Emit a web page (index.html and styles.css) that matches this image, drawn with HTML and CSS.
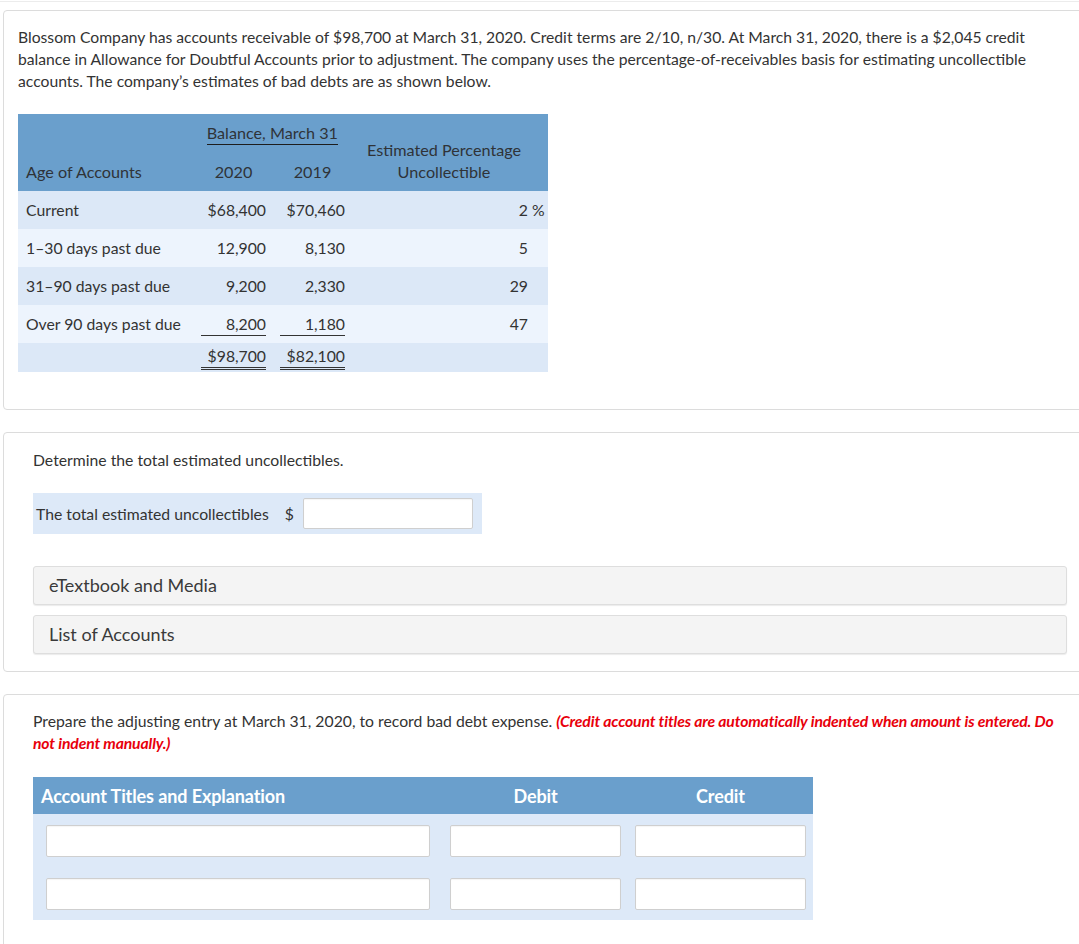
FILE: index.html
```html
<!DOCTYPE html>
<html>
<head>
<meta charset="utf-8">
<link rel="stylesheet" href="styles.css">
</head>
<body>
<div class="topline"></div>
<div class="page">
  <section class="card stem">
    <p class="intro">Blossom Company has accounts receivable of $98,700 at March 31, 2020. Credit terms are 2/10, n/30. At March 31, 2020, there is a $2,045 credit balance in Allowance for Doubtful Accounts prior to adjustment. The company uses the percentage-of-receivables basis for estimating uncollectible accounts. The company’s estimates of bad debts are as shown below.</p>
    <table class="aging">
      <colgroup>
        <col class="c1"><col class="c2"><col class="c3"><col class="c4"><col class="c5">
      </colgroup>
      <thead>
        <tr class="h1">
          <th class="age" rowspan="2">Age of Accounts</th>
          <th class="bal" colspan="2"><span class="bal-label">Balance, March 31</span></th>
          <th class="est" rowspan="2" colspan="2">Estimated Percentage<br>Uncollectible</th>
        </tr>
        <tr class="h2">
          <th class="yr"><span class="amt ctr">2020</span></th>
          <th class="yr"><span class="amt ctr">2019</span></th>
        </tr>
      </thead>
      <tbody>
        <tr class="odd">
          <td class="lbl">Current</td>
          <td class="num"><span class="amt">$68,400</span></td>
          <td class="num"><span class="amt">$70,460</span></td>
          <td class="pct">2</td>
          <td class="pctsign">&nbsp;%</td>
        </tr>
        <tr class="even">
          <td class="lbl">1–30 days past due</td>
          <td class="num"><span class="amt">12,900</span></td>
          <td class="num"><span class="amt">8,130</span></td>
          <td class="pct">5</td>
          <td class="pctsign"></td>
        </tr>
        <tr class="odd">
          <td class="lbl">31–90 days past due</td>
          <td class="num"><span class="amt">9,200</span></td>
          <td class="num"><span class="amt">2,330</span></td>
          <td class="pct">29</td>
          <td class="pctsign"></td>
        </tr>
        <tr class="even">
          <td class="lbl">Over 90 days past due</td>
          <td class="num"><span class="amt single">8,200</span></td>
          <td class="num"><span class="amt single">1,180</span></td>
          <td class="pct">47</td>
          <td class="pctsign"></td>
        </tr>
        <tr class="odd total">
          <td class="lbl"></td>
          <td class="num"><span class="amt double">$98,700</span></td>
          <td class="num"><span class="amt double">$82,100</span></td>
          <td class="pct"></td>
          <td class="pctsign"></td>
        </tr>
      </tbody>
    </table>
  </section>

  <section class="card part">
    <p class="prompt">Determine the total estimated uncollectibles.</p>
    <div class="answer-row">
      <span class="answer-label">The total estimated uncollectibles</span>
      <span class="dollar">$</span>
      <span class="input wide"></span>
    </div>
    <div class="resource">eTextbook and Media</div>
    <div class="resource">List of Accounts</div>
  </section>

  <section class="card part last">
    <p class="prompt">Prepare the adjusting entry at March 31, 2020, to record bad debt expense. <em class="note">(Credit account titles are automatically indented when amount is entered. Do not indent manually.)</em></p>
    <div class="journal">
      <div class="jhead">
        <span class="jh acct">Account Titles and Explanation</span>
        <span class="jh debit">Debit</span>
        <span class="jh credit">Credit</span>
      </div>
      <div class="jbody">
        <div class="jrow">
          <span class="input acct"></span><span class="input debit"></span><span class="input credit"></span>
        </div>
        <div class="jrow">
          <span class="input acct"></span><span class="input debit"></span><span class="input credit"></span>
        </div>
      </div>
    </div>
  </section>
</div>
</body>
</html>
```

FILE: styles.css
```css
html, body {
  margin: 0;
  padding: 0;
  background: #fff;
}
body {
  font-family: Lato, "Noto Sans", sans-serif;
  font-size: 15.75px;
  line-height: 22px;
  color: #333;
  overflow: hidden;
  width: 1079px;
}
.topline {
  height: 1px;
  border-bottom: 1px solid #ececec;
}
.page {
  padding: 8px 0 0 3px;
  width: 1094px;
}
.card {
  border: 1px solid #dcdcdc;
  border-radius: 4px;
  background: #fff;
  margin-bottom: 22px;
}
.stem {
  padding: 15px 14px 37px 14px;
}
.intro {
  margin: 0 0 22px 0;
  width: 1040px;
  font-size: 15.7px;
}
.aging {
  border-collapse: collapse;
  border-spacing: 0;
  width: 530px;
  table-layout: fixed;
}
.c1 { width: 177px; }
.c2 { width: 71px; }
.c3 { width: 79px; }
.c4 { width: 183px; }
.c5 { width: 20px; }
.aging thead {
  background: #6a9fcc;
}
.aging th {
  font-weight: normal;
  font-size: 16.2px;
  padding: 0;
  color: #2f3338;
}
.h1 { height: 36px; }
.h2 { height: 41px; }
.aging th.age {
  text-align: left;
  vertical-align: bottom;
  padding: 0 0 8px 8px;
}
.aging th.bal {
  vertical-align: top;
  padding: 8px 0 0 0;
  text-align: right;
}
.bal-label {
  display: inline-block;
  border-bottom: 1px solid #1d1d1d;
  line-height: 22px;
  margin-right: 7px;
}
.aging th.est {
  vertical-align: bottom;
  text-align: center;
  padding: 0 5px 8px 0;
}
.aging th.yr {
  vertical-align: bottom;
  text-align: right;
  padding: 0 0 8px 0;
}
.aging td {
  padding: 0;
  height: 38px;
  vertical-align: middle;
}
.odd { background: #dce8f7; }
.even { background: #edf4fd; }
.aging td.lbl { padding-left: 8px; white-space: nowrap; }
.aging td.num { text-align: right; }
.aging td.pct { text-align: right; }
.aging td.pctsign { text-align: left; white-space: nowrap; }
.amt {
  display: inline-block;
  min-width: 65px;
  text-align: right;
  line-height: 22px;
}
.amt.ctr { text-align: center; }
.amt.single { border-bottom: 1px solid #333; }
.amt.double { border-bottom: 3px double #333; }
.aging tr.total td {
  height: 29px;
  vertical-align: top;
  padding-top: 2px;
  box-sizing: border-box;
}

.part {
  padding: 16px 29px 17px 29px;
}
.prompt {
  margin: 0;
}
.answer-row {
  display: flex;
  align-items: center;
  width: fit-content;
  background: #dde9f8;
  padding: 5px 9px 5px 3px;
  margin-top: 22px;
}
.answer-label {
  margin-right: 16px;
}
.dollar {
  margin-right: 9px;
}
.input {
  display: block;
  box-sizing: border-box;
  height: 32px;
  background: #fff;
  border: 1px solid #cfcfcf;
  border-radius: 2px;
  box-shadow: inset 0 1px 1px rgba(0,0,0,0.04);
}
.input.wide {
  width: 170px;
  height: 31px;
}
.resource {
  margin-top: 32px;
  background: #f4f4f4;
  border: 1px solid #dedede;
  border-radius: 3px;
  box-shadow: 0 1px 1px rgba(0,0,0,0.08);
  height: 39px;
  box-sizing: border-box;
  padding-left: 15px;
  font-size: 18px;
  line-height: 37px;
  color: #3a3a3a;
}
.resource + .resource {
  margin-top: 10px;
}
.last {
  padding-top: 15px;
  padding-bottom: 30px;
}
.note {
  color: #e8000b;
  font-weight: bold;
  font-style: italic;
  letter-spacing: -0.15px;
}
.journal {
  margin-top: 23px;
  width: 780px;
}
.jhead {
  background: #6a9fcc;
  height: 37px;
  display: flex;
  align-items: center;
  padding-left: 8px;
}
.jh {
  color: #fff;
  font-weight: bold;
  font-size: 18px;
  letter-spacing: -0.1px;
  text-align: center;
}
.jh.acct {
  text-align: left;
  width: 389px;
  margin-right: 20px;
}
.jh.debit {
  width: 171px;
  margin-right: 14px;
}
.jh.credit {
  width: 171px;
}
.jbody {
  background: #dde9f8;
  padding: 11px 0 10px 13px;
  display: flex;
  flex-direction: column;
  gap: 21px;
}
.jrow {
  display: flex;
}
.input.acct {
  width: 384px;
  margin-right: 20px;
}
.input.debit {
  width: 171px;
  margin-right: 14px;
}
.input.credit {
  width: 171px;
}
```
